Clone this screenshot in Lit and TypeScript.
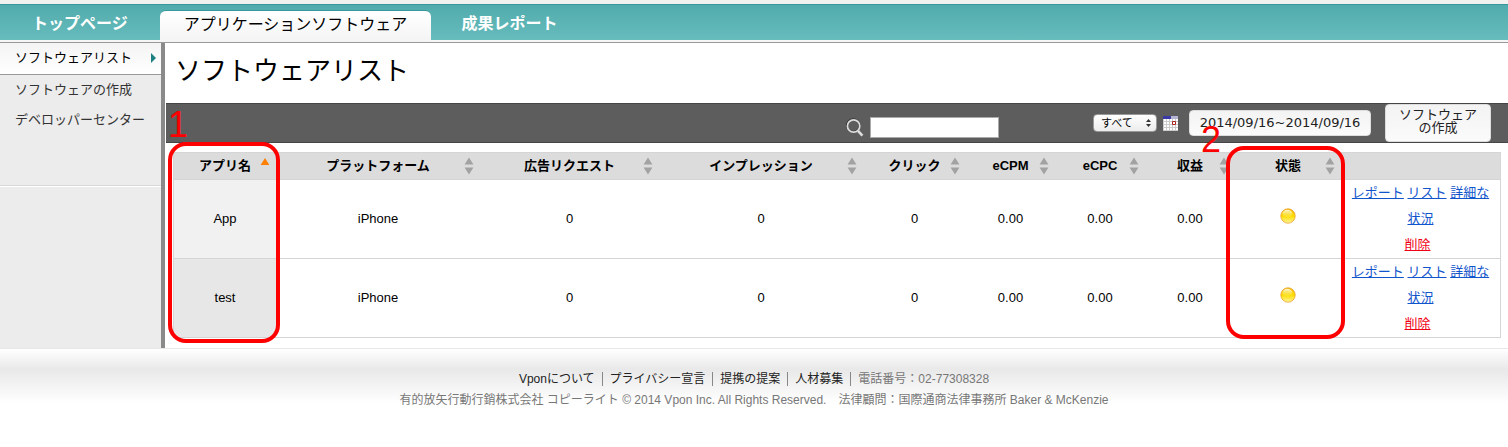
import { LitElement, html, css, svg } from "lit";
import { customElement, property, state } from "lit/decorators.js";
import { classMap } from "lit/directives/class-map.js";

interface Column {
  label: string;
  width: number;
  sort: "none" | "asc" | "off";
  mark?: string;
}

interface AppRow {
  name: string;
  platform: string;
  values: string[];
}

const COLUMNS: Column[] = [
  { label: "アプリ名", width: 102, sort: "asc", mark: "1" },
  { label: "プラットフォーム", width: 204, sort: "none" },
  { label: "広告リクエスト", width: 179, sort: "none" },
  { label: "インプレッション", width: 204, sort: "none" },
  { label: "クリック", width: 103, sort: "none" },
  { label: "eCPM", width: 89, sort: "none" },
  { label: "eCPC", width: 90, sort: "none" },
  { label: "収益", width: 90, sort: "none" },
  { label: "状態", width: 106, sort: "none", mark: "2" },
  { label: "", width: 159, sort: "off" },
];

const TOTAL_WIDTH = COLUMNS.reduce((sum, c) => sum + c.width, 0);

const ROWS: AppRow[] = [
  { name: "App", platform: "iPhone", values: ["0", "0", "0", "0.00", "0.00", "0.00"] },
  { name: "test", platform: "iPhone", values: ["0", "0", "0", "0.00", "0.00", "0.00"] },
];

const FONT = css`"Liberation Sans", "Noto Sans CJK JP", sans-serif`;

@customElement("status-light")
export class StatusLight extends LitElement {
  static styles = css`
    :host { display: block; }
    .light { display: block; margin: 0 auto 6px; }
  `;

  render() {
    return html`<svg class="light" width="16" height="16" viewBox="0 0 16 16" role="img" aria-label="待機中">
      <defs>
        <linearGradient id="body" x1="0" y1="0" x2="0" y2="1">
          <stop offset="0" stop-color="#f7b800" />
          <stop offset="0.5" stop-color="#ffdc00" />
          <stop offset="1" stop-color="#fff59a" />
        </linearGradient>
        <linearGradient id="shine" x1="0" y1="0" x2="0" y2="1">
          <stop offset="0" stop-color="#fffbe0" stop-opacity="0.95" />
          <stop offset="1" stop-color="#ffe95a" stop-opacity="0.2" />
        </linearGradient>
      </defs>
      <circle cx="8" cy="8" r="7.2" fill="url(#body)" stroke="#eba02a" stroke-width="0.8" />
      <ellipse cx="7.4" cy="5.6" rx="5" ry="3.8" fill="url(#shine)" />
    </svg>`;
  }
}

@customElement("software-table")
export class SoftwareTable extends LitElement {
  @property({ attribute: false }) rows: AppRow[] = [];

  static styles = css`
    :host { display: block; }
    .table {
      width: 100%;
      table-layout: fixed;
      border-collapse: separate;
      border-spacing: 0;
      border: 1px solid #d5d5d5;
      border-bottom: 0;
      box-sizing: border-box;
      font: 13px/26px ${FONT};
      color: #000;
      text-align: center;
    }
    .head {
      position: relative;
      height: 26px;
      padding: 0;
      background: #dcdcdc;
      border-bottom: 1px solid #d5d5d5;
    }
    .sort {
      display: grid;
      grid-template-columns: 16px 1fr 16px;
      align-items: center;
      width: 100%;
      height: 26px;
      padding: 0;
      border: 0;
      background: none;
      color: inherit;
      font: bold 13px/26px ${FONT};
      cursor: pointer;
    }
    .label { grid-column: 2; white-space: nowrap; }
    .arrows { display: block; }
    .cell {
      height: 78px;
      padding: 0;
      border-bottom: 1px solid #d5d5d5;
    }
    .key { background: #f1f1f1; font-weight: 400; }
    .even .key { background: #e7e7e7; }
    .links { padding: 0 8px; line-break: anywhere; }
    .link { color: #1155cc; }
    .remove { margin-right: 6px; color: #f00014; }
    .frame {
      position: absolute;
      z-index: 1;
      top: -11px;
      left: -6px;
      right: -4px;
      height: 193px;
      border: 4px solid #f00;
      border-radius: 18px;
      pointer-events: none;
    }
    .second { top: -7px; left: -9px; height: 185px; }
    .number {
      position: absolute;
      top: -39px;
      left: -4px;
      color: #f00;
      font: 36px/36px ${FONT};
    }
    .second .number { top: -28px; left: -29px; }
  `;

  private arrows(sort: string) {
    return svg`<svg class="arrows" width="10" height="18" viewBox="0 0 10 18" aria-hidden="true">
      ${sort === "asc"
        ? svg`<path d="M5 1 9.4 8H.6z" fill="#ff8000" />`
        : svg`<path d="M5 .5 9.4 7.5H.6zM.6 10.5h8.8L5 17.5z" fill="#a2a2a2" />`}
    </svg>`;
  }

  render() {
    return html`<table class="table">
      <colgroup>
        ${COLUMNS.map((c) => html`<col style="width:${(c.width / TOTAL_WIDTH) * 100}%" />`)}
      </colgroup>
      <thead>
        <tr>
          ${COLUMNS.map((c) => c.sort === "off"
            ? html`<td class="head"></td>`
            : html`<th class="head" scope="col">
                <button class="sort" type="button"><span class="label">${c.label}</span>${this.arrows(c.sort)}</button>
                ${c.mark
                  ? html`<div class=${classMap({ frame: true, second: c.mark === "2" })}><span class="number">${c.mark}</span></div>`
                  : ""}
              </th>`)}
        </tr>
      </thead>
      <tbody>
        ${this.rows.map((r, i) => html`<tr class=${classMap({ even: i % 2 === 1 })}>
          <th class="cell key" scope="row">${r.name}</th>
          <td class="cell">${r.platform}</td>
          ${r.values.map((v) => html`<td class="cell">${v}</td>`)}
          <td class="cell"><status-light></status-light></td>
          <td class="cell links"><a class="link" href="#report">レポート</a> <a class="link" href="#list">リスト</a> <a class="link" href="#detail">詳細な状況</a><br /><a class="link remove" href="#remove">削除</a></td>
        </tr>`)}
      </tbody>
    </table>`;
  }
}

@customElement("app-root")
export class AppRoot extends LitElement {
  @state() private rows = ROWS;

  static styles = css`
    :host {
      display: block;
      background: #fff;
      color: #000;
      font: 13px/20px ${FONT};
    }
    a { text-decoration: none; }
    .top { border-top: 4px solid #f1f1f0; border-bottom: 1px solid #999; }
    .nav {
      display: flex;
      align-items: flex-end;
      height: 38px;
      box-sizing: border-box;
      border-top: 1px solid #38979a;
      background: linear-gradient(#51abac, #67bcbc 35px, #f6f6f6 35px);
    }
    .tab {
      padding: 0 30px 6px;
      color: #fff;
      font: bold 16px/24px ${FONT};
    }
    .home { padding: 0 32px 6px; }
    .current {
      padding: 2px 24px 5px;
      border-top: 1px solid #38979a;
      border-radius: 6px 6px 0 0;
      background: linear-gradient(#fff, #f4f4f4);
      color: #000;
      font-weight: 400;
    }
    .body { display: flex; }
    .side { flex: 0 0 161px; background: #ececec; }
    .menu {
      margin: 0;
      padding: 0 0 50px;
      list-style: none;
      border-bottom: 1px solid #d8d8d8;
      box-shadow: 0 1px #fff;
    }
    .item {
      display: flex;
      align-items: center;
      justify-content: space-between;
      height: 29px;
      padding: 0 5px 1px 15px;
      color: #333;
    }
    .selected {
      height: 30px;
      border-bottom: 1px solid #999;
      background: linear-gradient(#f4f4f4, #fff);
      color: #000;
    }
    .main {
      flex: 1;
      min-width: 0;
      padding-bottom: 10px;
      border-left: 4px solid #8a8a8a;
    }
    .title {
      margin: 0;
      padding: 10px 10px 14px;
      font: 26px/36px ${FONT};
    }
    .bar {
      display: flex;
      align-items: center;
      justify-content: flex-end;
      height: 38px;
      margin: 0 0 9px 1px;
      padding-right: 17px;
      border: solid #454545;
      border-width: 1px 0;
      background: #5d5d5d;
    }
    .search {
      display: flex;
      align-items: center;
      gap: 6px;
      padding-top: 9px;
      margin-right: 94px;
    }
    .query {
      width: 129px;
      height: 21px;
      box-sizing: border-box;
      padding: 0 4px;
      border: 1px solid #aaa;
      background: #fff;
      font: 13px ${FONT};
    }
    .picker { position: relative; display: flex; align-items: center; margin-right: 6px; }
    .select {
      width: 64px;
      height: 18px;
      padding: 0 7px;
      border: 1px solid #999;
      border-radius: 4px;
      appearance: none;
      background: linear-gradient(#fff, #ececec);
      color: #000;
      font: 11px/16px ${FONT};
    }
    .updown { position: absolute; right: 6px; pointer-events: none; }
    .button {
      border: 1px solid #ddd;
      border-radius: 4px;
      background: linear-gradient(#f3f3f3, #fbfbfb);
      color: #222;
    }
    .date {
      width: 182px;
      height: 26px;
      margin: 0 14px 0 11px;
      padding: 0;
      font: 13px/24px "DejaVu Sans", sans-serif;
    }
    .create {
      width: 106px;
      height: 38px;
      padding: 0 12px 4px;
      font: 13px/13px ${FONT};
    }
    .main software-table { margin: 0 7px 0 8px; }
    .footer {
      padding: 20px 16px;
      border-top: 1px solid #e8e8e8;
      background: linear-gradient(#fff, #e9e9e9 20px, #ececec 26px, #fff 54px);
      color: #777;
      text-align: center;
      font: 12px/21px ${FONT};
    }
    .line { margin: 0; }
    .more { color: #222; }
    .sep { display: inline-block; width: 1px; height: 14px; margin: 0 7px; background: #888; vertical-align: -3px; }
  `;

  render() {
    const sep = html`<span class="sep"></span>`;
    return html`
      <header class="top">
        <nav class="nav">
          <a class="tab home" href="#top">トップページ</a>
          <a class="tab current" href="#software" aria-current="page">アプリケーションソフトウェア</a>
          <a class="tab" href="#results">成果レポート</a>
        </nav>
      </header>
      <div class="body">
        <aside class="side">
          <ul class="menu">
            <li><a class="item selected" href="#list">ソフトウェアリスト
              <svg width="5" height="10" viewBox="0 0 5 10" aria-hidden="true"><path d="M0 0 5 5 0 10z" fill="#1c8081" /></svg></a></li>
            <li><a class="item" href="#create">ソフトウェアの作成</a></li>
            <li><a class="item" href="#center">デベロッパーセンター</a></li>
          </ul>
        </aside>
        <main class="main">
          <h1 class="title">ソフトウェアリスト</h1>
          <div class="bar">
            <label class="search">
              <svg width="18" height="20" viewBox="0 0 18 20" role="img" aria-label="検索">
                <circle cx="7.2" cy="7.4" r="6.4" fill="none" stroke="#333" stroke-width="1.6" />
                <circle cx="7.6" cy="8" r="6.2" fill="none" stroke="#ddd" stroke-width="1.7" />
                <path d="m12 12.800 4.400 4.800" stroke="#ddd" stroke-width="2.6" />
              </svg>
              <input class="query" type="text" />
            </label>
            <div class="picker">
              <select class="select" aria-label="期間"><option>すべて</option></select>
              <svg class="updown" width="5" height="8" viewBox="0 0 5 8" aria-hidden="true"><path d="M2.5 0 5 3H0zM0 5h5L2.5 8z" fill="#333" /></svg>
            </div>
            <svg width="15" height="15" viewBox="0 0 15 15" role="img" aria-label="カレンダー">
              <path d="M0 0h15v15H0z" fill="#fff" />
              <path d="M.5 3v12M3.5 3v12M6.5 3v12M9.5 3v12M12.5 3v12M0 5.5h15M0 8.5h15M0 11.5h15M0 14.5h15" stroke="#ccc" />
              <path d="M0 0h15v3H0z" fill="#b4b4d4" />
              <path d="M0 0h8v3H0z" fill="#3a3aa6" />
              <path d="M9.5 5.5h3v3h-3z" fill="#fff" stroke="#a22" />
            </svg>
            <button class="button date" type="button">2014/09/16~2014/09/16</button>
            <button class="button create" type="button">ソフトウェアの作成</button>
          </div>
          <software-table .rows=${this.rows}></software-table>
        </main>
      </div>
      <footer class="footer">
        <p class="line"><a class="more" href="#about">Vponについて</a>${sep}<a class="more" href="#privacy">プライバシー宣言</a>${sep}<a class="more" href="#partner">提携の提案</a>${sep}<a class="more" href="#jobs">人材募集</a>${sep}電話番号：02-77308328</p>
        <p class="line">有的放矢行動行銷株式会社 コピーライト © 2014 Vpon Inc. All Rights Reserved.　法律顧問：国際通商法律事務所 Baker &amp; McKenzie</p>
      </footer>
    `;
  }
}
